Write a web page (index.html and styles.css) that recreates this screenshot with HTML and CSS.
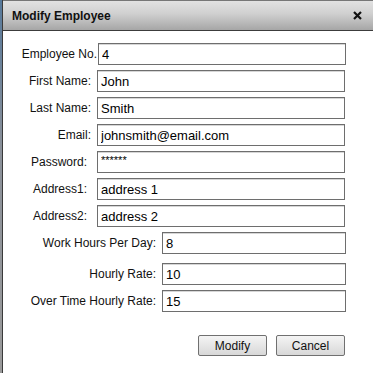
FILE: index.html
```html
<!DOCTYPE html>
<html lang="en">
<head>
    <meta charset="UTF-8">
    <title>Modify Employee</title>
    <link rel="stylesheet" href="styles.css">
</head>
<body>
    <div class="dialog">

        <div class="titlebar">
            <span class="title">Modify Employee</span>
            <svg class="close" width="9" height="9" viewBox="0 0 9 9">
                <path d="M1 1 L8 8 M8 1 L1 8" stroke="#111" stroke-width="2.2" />
            </svg>
        </div>

        <div class="content">
            <div class="row">
                <label class="lbl lbl-emp">Employee No.</label>
                <input class="field field-emp" type="text" value="4">
            </div>
            <div class="row">
                <label class="lbl lbl-a">First Name:</label>
                <input class="field field-a" type="text" value="John">
            </div>
            <div class="row">
                <label class="lbl lbl-a">Last Name:</label>
                <input class="field field-a" type="text" value="Smith">
            </div>
            <div class="row">
                <label class="lbl lbl-a">Email:</label>
                <input class="field field-a" type="text" value="johnsmith@email.com">
            </div>
            <div class="row">
                <label class="lbl lbl-b">Password:</label>
                <input class="field field-a pwd" type="text" value="******">
            </div>
            <div class="row">
                <label class="lbl lbl-b">Address1:</label>
                <input class="field field-a" type="text" value="address 1">
            </div>
            <div class="row">
                <label class="lbl lbl-b">Address2:</label>
                <input class="field field-emp" type="text" value="address 2">
            </div>
            <div class="row">
                <label class="lbl lbl-c">Work Hours Per Day:</label>
                <input class="field field-c" type="text" value="8">
            </div>
            <div class="row row-gap">
                <label class="lbl lbl-c">Hourly Rate:</label>
                <input class="field field-c" type="text" value="10">
            </div>
            <div class="row">
                <label class="lbl lbl-c">Over Time Hourly Rate:</label>
                <input class="field field-c" type="text" value="15">
            </div>

            <div class="buttons">
                <button class="btn">Modify</button>
                <button class="btn">Cancel</button>
            </div>
        </div>

    </div>
</body>
</html>
```

FILE: styles.css
```css
html, body {
    margin: 0;
    height: 100%;
}

body {
    font-family: "Liberation Sans", Arial, sans-serif;
    background: linear-gradient(#56799b, #8a9099 40%, #9a9a9a);
    overflow: hidden;
}

.dialog {
    margin-left: 2px;
    height: 373px;
    background-color: white;
    border-left: 1px solid #3a3a3a;
}

.titlebar {
    height: 31px;
    box-sizing: border-box;
    display: flex;
    align-items: center;
    justify-content: space-between;
    padding: 0 11px 0 9px;
    background: linear-gradient(#e2e2e2, #cfcfcf 45%, #a6a6a6);
    border-top: 1px solid #777;
    border-bottom: 1px solid #3c3c3c;
}

.title {
    font-size: 12px;
    font-weight: 700;
    color: #111;
}

.content {
    padding-top: 12px;
}

.row {
    display: flex;
    align-items: center;
    margin-bottom: 5px;
}

.row-gap {
    margin-top: 9px;
}

.lbl {
    font-size: 12px;
    color: #111;
    text-align: right;
    box-sizing: border-box;
}

.lbl-emp {
    width: 95px;
    padding-right: 1px;
}

.lbl-a {
    width: 94px;
    padding-right: 6px;
}

.lbl-b {
    width: 94px;
    padding-right: 10px;
}

.lbl-c {
    width: 159px;
    padding-right: 6px;
}

.field {
    height: 22px;
    box-sizing: border-box;
    border: 1px solid #6e6e6e;
    box-shadow: inset 0 1px 0 #d6d6d6;
    border-radius: 0;
    padding: 1px 3px 0;
    font-family: "Liberation Sans", Arial, sans-serif;
    font-size: 13px;
    color: #000;
    outline: none;
}

.field-emp {
    width: 248px;
}

.field-a {
    width: 248px;
}

.field-c {
    width: 184px;
}

.pwd {
    font-size: 11px;
    padding-bottom: 5px;
}

.buttons {
    display: flex;
    gap: 9px;
    margin: 23px 0 0 195px;
}

.btn {
    width: 69px;
    height: 21px;
    box-sizing: border-box;
    border: 1px solid #707070;
    border-radius: 2px;
    background: linear-gradient(#f4f4f4, #e6e6e6 50%, #d8d8d8);
    font-family: "Liberation Sans", Arial, sans-serif;
    font-size: 12px;
    color: #111;
    padding: 0;
}
```
